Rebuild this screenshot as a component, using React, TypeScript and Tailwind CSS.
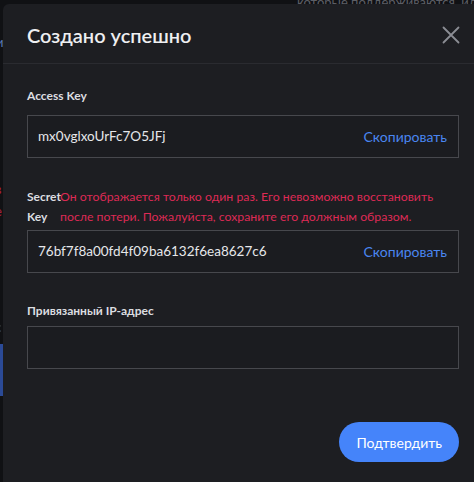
import React from 'react';

const font = { fontFamily: 'Lato, "Noto Sans", sans-serif' };

const KeyField: React.FC<{ value?: string; copy?: boolean }> = ({ value, copy }) => (
    <div className="h-[43px] border border-[#47484d] bg-[#1b1c20] flex items-center justify-between pl-[10px] pr-[11px]">
        <span className="text-[13.5px] text-[#e6e7ea]">{value}</span>
        {copy && <span className="text-[14px] text-[#4a86f0] cursor-pointer">Скопировать</span>}
    </div>
);

const App: React.FC = () => {
    return (
        <div className="relative w-[474px] h-[482px] overflow-hidden bg-[#101114]" style={font}>
            {/* backdrop page remnants */}
            <div className="absolute left-[297px] top-[-7px] text-[13px] text-[#5d5f66] whitespace-nowrap">которые поддерживаются, или к</div>
            <div className="absolute left-[-4px] top-[33px] text-[13px] text-[#5a78b8]">и</div>
            <div className="absolute left-[-5px] top-[178px] text-[13px] leading-[22px] text-[#b0203f]">в<br />е</div>
            <div className="absolute left-[-5px] top-[318px] text-[13px] text-[#3d62b0]">с</div>
            <div className="absolute left-0 top-[344px] w-[3px] h-[52px] bg-[#2b4a96]" />

            {/* modal */}
            <div className="absolute left-[3px] top-[4px] w-[490px] h-[500px] rounded-[6px] bg-[#1d1e22]">
                <div className="h-[60px] border-b border-[#2a2b30] flex items-center justify-between pl-[24px] pr-[33px]">
                    <h2 className="text-[20px] font-semibold text-[#eeeff1] pt-[2px]">Создано успешно</h2>
                    <svg width="18" height="18" viewBox="0 0 18 18" className="text-[#8b8d94] mt-[2px]">
                        <path d="M1.5 1.5l15 15M16.5 1.5l-15 15" stroke="currentColor" strokeWidth="1.8" strokeLinecap="round" />
                    </svg>
                </div>

                <div className="pl-[24px] w-[456px] pt-[23px] flex flex-col">
                    <div className="flex flex-col gap-[10px]">
                        <div className="text-[12px] font-bold text-[#dcdde0] leading-[18px]">Access Key</div>
                        <KeyField value="mx0vglxoUrFc7O5JFj" copy />
                    </div>

                    <div className="mt-[29px] flex flex-col gap-[3px]">
                        <div className="flex items-start">
                            <div className="w-[33px] shrink-0 text-[12px] font-bold text-[#dcdde0] leading-[20px]">Secret Key</div>
                            <div className="text-[12.3px] text-[#dd2a55] leading-[20px]">
                                Он отображается только один раз. Его невозможно восстановить после потери. Пожалуйста, сохраните его должным образом.
                            </div>
                        </div>
                        <KeyField value="76bf7f8a00fd4f09ba6132f6ea8627c6" copy />
                    </div>

                    <div className="mt-[29px] flex flex-col gap-[6px]">
                        <div className="text-[12px] font-bold text-[#dcdde0] leading-[18px]">Привязанный IP-адрес</div>
                        <KeyField />
                    </div>

                    <div className="mt-[53px] flex justify-end">
                        <button className="h-[40px] px-[17px] rounded-full bg-[#4584fa] text-[14px] text-white">Подтвердить</button>
                    </div>
                </div>
            </div>
        </div>
    );
};

export default App;
